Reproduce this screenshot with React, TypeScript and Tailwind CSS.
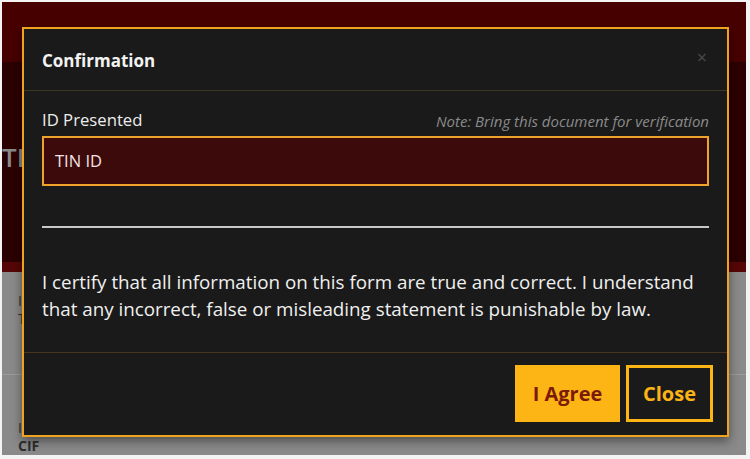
import React from 'react'

const App = () => {
  return (
    <div className="w-[750px] h-[459px] bg-[#f4f4f4] pt-[2px] pl-[2px] pr-[4px] pb-[4px] overflow-hidden" style={{ fontFamily: '"Open Sans", "Noto Sans", sans-serif' }}>
      <div className="relative w-full h-full overflow-hidden bg-[#8a8a8a]">
        {/* Page behind the dimmed overlay */}
        <div className="h-[60px] bg-[#470000]" />
        <div className="h-[200px] bg-[#2b0000] flex items-center">
          <h1 className="text-[26px] font-semibold text-[#8a8a8a] mt-[-10px]">TE</h1>
        </div>
        <div className="h-[10px] bg-[#560606]" />
        <div className="px-4 pt-5 text-[#2e2e2e] text-[14px] leading-[18px]">
          <div>ID</div>
          <div>TIN</div>
        </div>
        <div className="mt-[46px] h-px bg-[#9c9c9c]" />
        <div className="px-4 pt-[44px] text-[#2e2e2e] text-[14px] leading-[18px]">
          <div>ID</div>
          <div className="font-bold">CIF</div>
        </div>

        {/* Modal */}
        <div className="absolute left-[20px] top-[25px] w-[707px] h-[410px] border-2 border-[#eea21f] bg-[#1a1a1a] shadow-[0_4px_10px_rgba(0,0,0,0.45)] flex flex-col">
          <div className="h-[62px] shrink-0 flex items-center justify-between pl-[18px] pr-[20px] border-b border-[#3b3820]">
            <h2 className="text-[17px] font-bold text-[#f2f2f2] mt-[2px]">Confirmation</h2>
            <span className="text-[18px] leading-none text-[#4a4a4a] mt-[-6px]">×</span>
          </div>

          <div className="flex-1 px-[18px] pt-[17px]">
            <div className="flex items-end justify-between">
              <label className="text-[16.7px] text-[#ededed] leading-[24px]">ID Presented</label>
              <span className="text-[15px] italic text-[#8a8a8a] leading-[22px]">Note: Bring this document for verification</span>
            </div>
            <div className="mt-[4px] h-[50px] border-2 border-[#f0a32a] bg-[#3d0a0c] flex items-center px-[11px]">
              <span className="text-[16.5px] text-[#f3e2e2]">TIN ID</span>
            </div>
            <div className="mt-[40px] h-[2px] bg-[#c8c8c8]" />
            <p className="mt-[41px] text-[18.8px] leading-[27px] text-[#f0f0f0]">
              I certify that all information on this form are true and correct. I understand that any incorrect, false or misleading statement is punishable by law.
            </p>
          </div>

          <div className="h-[83px] shrink-0 border-t border-[#45361a] flex items-start justify-end gap-[6px] pt-[12px] pr-[14px]">
            <button className="w-[105px] h-[57px] bg-[#fdb415] text-[#7b1a08] text-[20px] font-bold">I Agree</button>
            <button className="w-[87px] h-[57px] border-[3px] border-[#fdb415] bg-[#1a1a1a] text-[#fdb415] text-[20px] font-bold">Close</button>
          </div>
        </div>
      </div>
    </div>
  )
}

export default App
